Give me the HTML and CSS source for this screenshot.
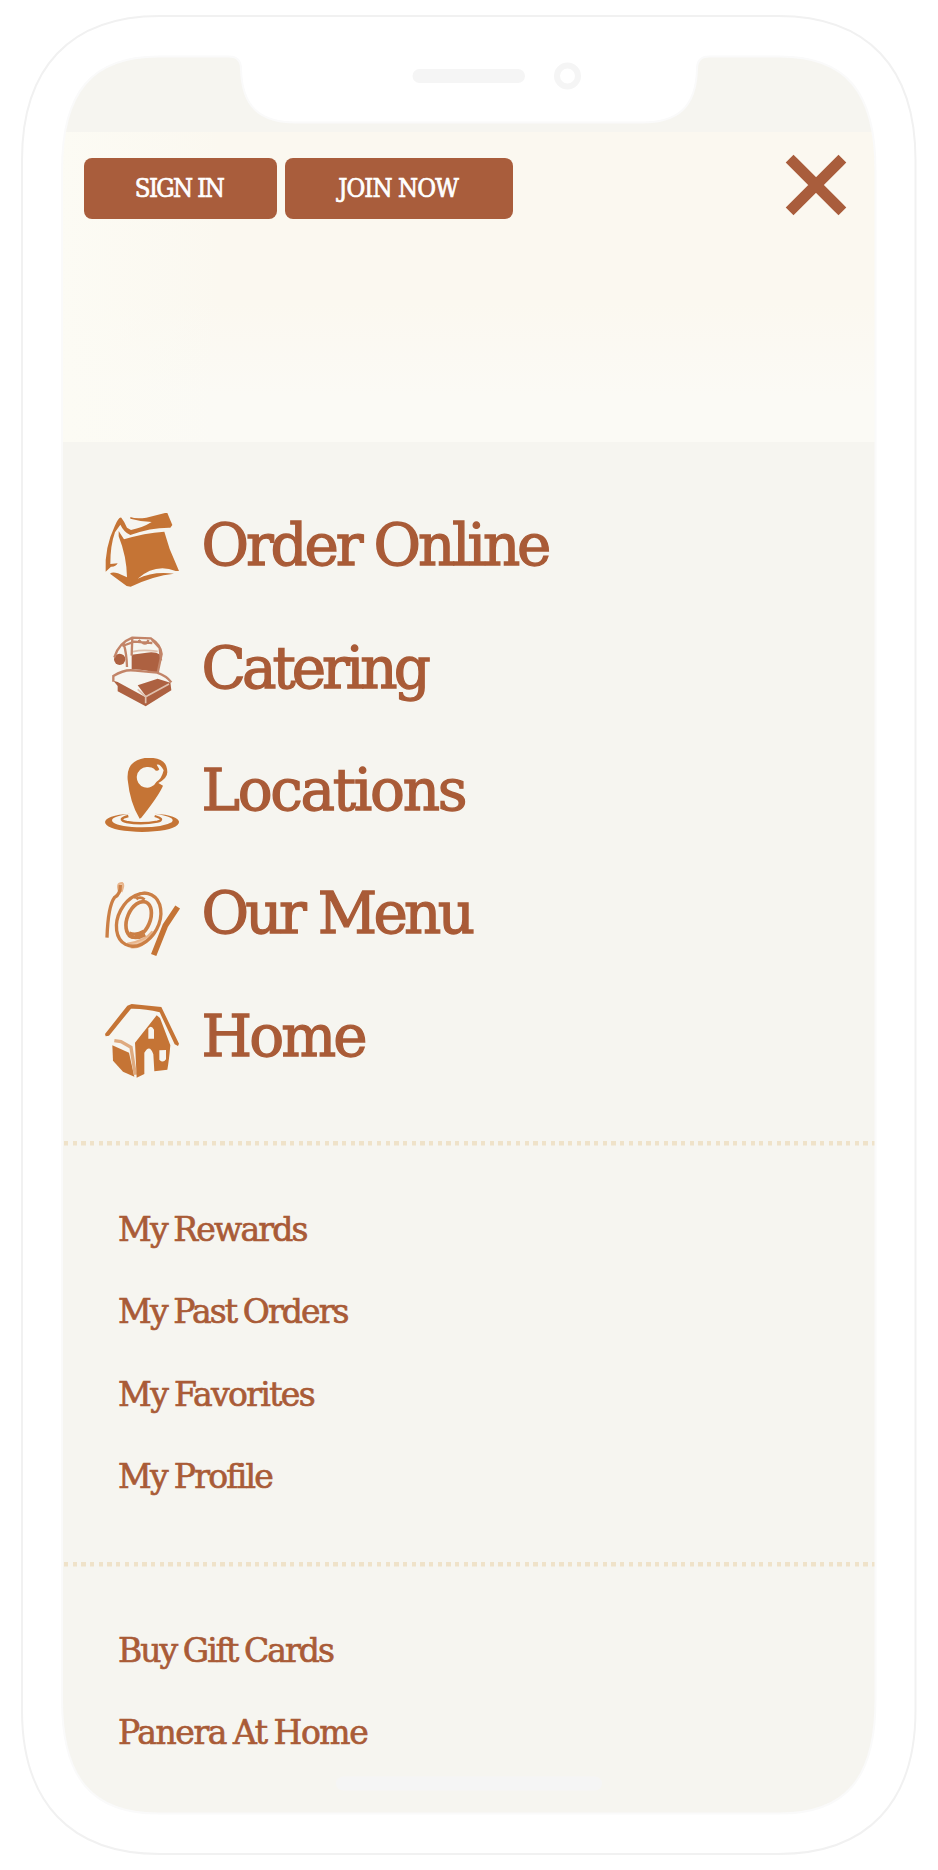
FILE: index.html
```html
<!DOCTYPE html>
<html lang="en">
<head>
<meta charset="utf-8">
<title>Menu</title>
<link rel="stylesheet" href="styles.css">
</head>
<body>
<div class="phone">
  <main class="screen">
    <header class="top">
      <div class="auth"><a class="btn sign">SIGN IN</a><a class="btn join">JOIN NOW</a></div>
      <svg class="close" viewBox="0 0 60 60"><path d="M7.500 7.500L52.500 52.500M52.500 7.500L7.500 52.500"/></svg>
    </header>
    <nav class="primary">
      <a class="item"><svg class="icon" viewBox="0 0 222 222"><path d="M76 12Q92 18 124 14L180 0H187L202 36L196 44Q138 43 76 66Q57 58 46 35L30 58Q16 96 16 153L38 151Q32 162 18 161L2 176Q-2 105 29 40Q41 11 49 14Q58 25 66 44L78 51Q113 44 140 27Q108 26 76 17Z"/><path d="M41 54Q50 68 57 79Q118 60 178 56L194 108L222 174H212Q152 150 98 197Q144 174 207 182Q146 188 77 221L65 219L15 182Q22 175 39 181L66 193Q65 130 41 70Z"/></svg><span class="t order">Order Online</span></a>
      <a class="item"><svg class="icon cater" viewBox="0 8 222 222"><path d="M80 64L125 58Q150 54 166 64Q169 96 155 119Q111 107 80 109Z"/><path d="M25 142L38 146L122 192L196 147L199 171L122 219L38 174V158Z"/><path d="M98 156L158 136L196 148L124 190Z"/><circle cx="44" cy="78" r="17"/><path class="line" d="M28 72Q41 29 82 13L137 15Q167 34 170 62L158 118M82 13L80 67M56 31Q65 61 66 101M52 38L88 25L142 29M101 20Q124 42 130 20M140 18L164 44L168 82M25 145V128Q60 106 91 112L156 118Q185 128 199 147"/><path class="line pale" d="M84 55Q113 48 158 54M98 168L122 190L192 152M122 190V210"/></svg><span class="t catering">Catering</span></a>
      <a class="item"><svg class="icon" viewBox="0 0 222 222"><path d="M104 182Q75 135 68 65Q63 9 119 0H145Q187 4 187 43Q187 61 160 75L174 83Q162 112 109 179ZM125 27A31 31 0 1 0 154 72Q170 63 176 37Q165 16 155 20L163 34Q155 44 147 32Q140 26 125 27Z" fill-rule="evenodd"/><path fill-rule="evenodd" d="M76 167C-25 171-25 212 76 220Q111 224 148 220C247 212 247 171 148 167Q216 176 200 193Q175 208 111 208Q45 208 24 193Q8 176 76 167Z"/><path class="line" d="M70 174Q33 184 65 192Q109 200 157 191Q183 184 149 174"/></svg><span class="t locations">Locations</span></a>
      <a class="item"><svg class="icon plate" viewBox="0 8 222 222"><path class="light" d="M43 42Q32 13 52 14Q59 18 49 41M66 196Q121 188 142 159Q118 213 77 207"/><path class="fork" d="M46 20Q47 47 29 57Q9 83 6 178"/><ellipse cx="101" cy="124" rx="61" ry="84" transform="rotate(28 101 124)"/><ellipse class="rim" cx="101" cy="123" rx="34" ry="56" transform="rotate(23 101 123)"/><path class="detail" d="M87 60Q100 41 130 45M94 63Q105 53 119 64M73 163Q93 172 116 158M70 172Q91 187 121 170"/><path class="knife" d="M218 86L181 142L146 230"/></svg><span class="t menu">Our Menu</span></a>
      <a class="item"><svg class="icon" viewBox="0 0 222 222"><path d="M0 90L67 5L80 0L169 9L222 119L219 126L209 121L164 25Q120 13 78 14L12 95L2 97Z"/><path d="M22 124L72 146L88 218L54 203L24 170Z"/><path class="house-edge" d="M28 110L48 113L78 130L91 212"/><path d="M155 34L165 42L196 124Q192 170 187 197L148 202L145 151Q134 118 118 146V210L95 221L90 116ZM130 73V104H147V77Q139 62 130 73ZM163 139V167Q174 179 183 166V138Z" fill-rule="evenodd"/></svg><span class="t home">Home</span></a>
    </nav>
    <nav class="links">
      <a class="rewards">My Rewards</a>
      <a class="orders">My Past Orders</a>
      <a class="favorites">My Favorites</a>
      <a class="profile">My Profile</a>
    </nav>
    <nav class="links">
      <a class="gift">Buy Gift Cards</a>
      <a class="panera">Panera At Home</a>
    </nav>
  </main>
  <svg class="frame" viewBox="0 0 938 1870">
    <path class="bezel" fill-rule="evenodd" d="M-5 -5H943V1875H-5ZM62 170C62 92 92 56.500 158 56.500H229Q241 56.500 241 69C242 107 260 122.500 296 122.500H642C678 122.500 696 107 697 69Q697 56.500 709 56.500H780C846 56.500 875.500 92 875.500 170V1700C875.500 1778 846 1813.500 780 1813.500H158C92 1813.500 62 1778 62 1700Z"/>
    <path class="edge" d="M160 16H778C868 16 915.500 68 915.500 160V1710C915.500 1802 868 1854 778 1854H160C70 1854 22 1802 22 1710V160C22 68 70 16 160 16Z"/>
    <rect class="grey" x="412.500" y="69" width="112.500" height="14" rx="7"/>
    <circle class="camera" cx="567.500" cy="76" r="10.500"/>
    <rect class="grey" x="336" y="1776.500" width="266" height="14" rx="7"/>
  </svg>
</div>
</body>
</html>
```
FILE: styles.css
```css
body { margin: 0; background: #fff; font-family: "DejaVu Serif", serif; color: #a95b37; }
.phone { position: relative; width: 938px; height: 1870px; overflow: hidden; }
.frame { position: absolute; inset: 0; width: 938px; height: 1870px; }
.bezel { fill: #fff; stroke: #fafafa; stroke-width: 2; }
.edge { fill: none; stroke: #f1f1f1; stroke-width: 2; }
.grey { fill: #f5f5f5; }
.camera { fill: #fff; stroke: #f5f5f5; stroke-width: 6; }
.screen { box-sizing: border-box; margin: 0 61px; height: 1870px; padding-top: 132px; background: #f6f5f0; }
.top { box-sizing: border-box; height: 310px; padding: 23px 31.500px 0 23px; display: flex; justify-content: space-between; align-items: flex-start; background: linear-gradient(90deg, #fcfbf4, rgba(252, 251, 244, 0) 20%), linear-gradient(180deg, #fbf8f0 55%, #fbfaf5 85%); }
.auth { display: flex; gap: 8px; padding-top: 3px; }
.btn { box-sizing: border-box; height: 61px; padding-bottom: 2px; border-radius: 8px; background: #a95d3c; color: #fff; display: flex; align-items: center; justify-content: center; font-size: 25.500px; font-stretch: condensed; letter-spacing: -1.600px; -webkit-text-stroke: 0.700px #fff; }
.sign { width: 193px; padding-right: 3px; }
.join { width: 228px; letter-spacing: -0.900px; padding-right: 2px; }
.close { width: 60px; height: 60px; fill: none; stroke: #a95d3c; stroke-width: 11; stroke-linecap: square; overflow: visible; }
.primary { padding: 71px 0 0 44px; height: 629px; box-sizing: border-box; display: flex; flex-direction: column; gap: 48.700px; }
.item { display: flex; align-items: center; gap: 22.500px; height: 74px; font-size: 58px; white-space: nowrap; -webkit-text-stroke: 1.300px #a95b37; }
.t { padding-bottom: 10px; }
.order { letter-spacing: -3.150px; word-spacing: -2px; }
.catering { letter-spacing: -4px; }
.locations { letter-spacing: -2.300px; }
.menu { letter-spacing: -3.700px; }
.home { letter-spacing: -2.900px; }
.icon { width: 74px; height: 74px; flex: none; fill: #c57435; overflow: visible; }
.line { fill: none; stroke: #c57435; stroke-width: 7; }
.cater { fill: #ad6141; }
.cater .line { stroke: #c28468; stroke-width: 7; }
.cater .pale { stroke: #dfc0ad; stroke-width: 5; }
.plate { fill: none; stroke: #cb7f45; stroke-width: 10; }
.plate .rim { stroke-width: 11; }
.plate .detail { stroke-width: 8; }
.plate .light { fill: #efc6a4; stroke: #e8b58c; stroke-width: 6; }
.plate .knife { stroke: #c57435; stroke-width: 17; }
.house-edge { fill: none; stroke: #dfaa7f; stroke-width: 10; }
.links { box-sizing: border-box; padding: 139px 0 0 57px; height: 421px; font-size: 33px; line-height: 40px; word-spacing: -2px; display: flex; flex-direction: column; gap: 42.300px; -webkit-text-stroke: 0.700px #a95b37; background: repeating-linear-gradient(90deg, #efe2c9 0 4.300px, transparent 4.300px 8.690px) 3px 70px / 100% 4.500px no-repeat; }
.links a { height: 40px; }
.rewards { letter-spacing: -1.850px; }
.orders { letter-spacing: -1.900px; }
.favorites { letter-spacing: -1.650px; }
.profile { letter-spacing: -1.750px; }
.gift { letter-spacing: -1.950px; }
.panera { letter-spacing: -1.450px; }
```
